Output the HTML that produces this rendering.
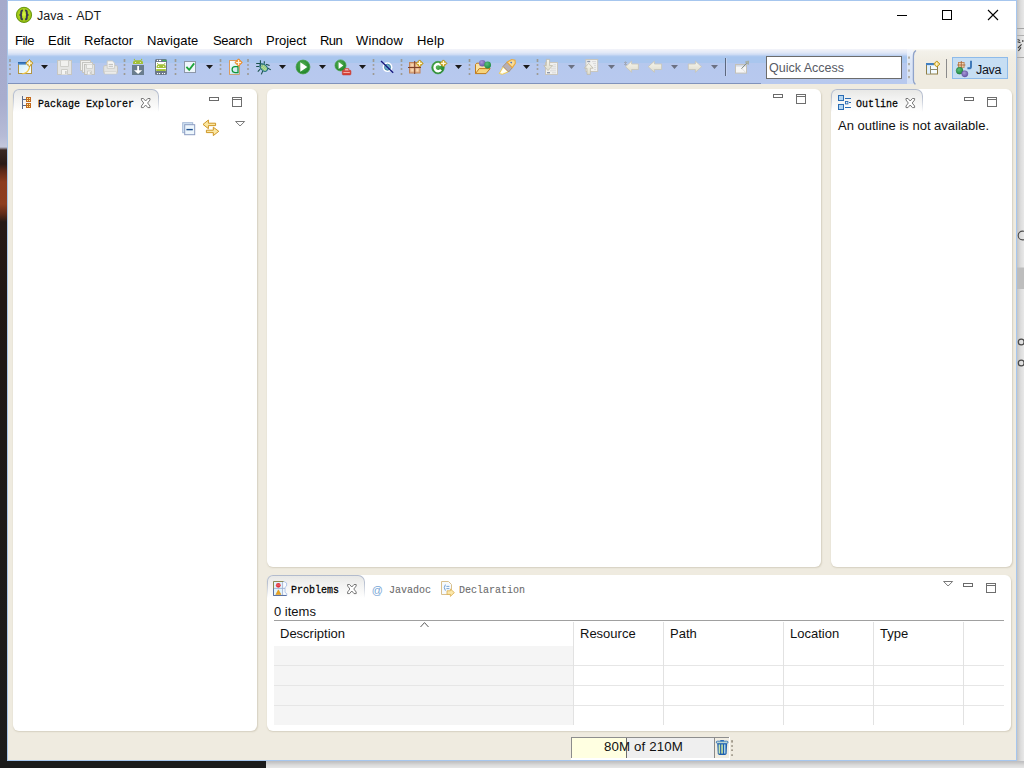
<!DOCTYPE html>
<html>
<head>
<meta charset="utf-8">
<title>Java - ADT</title>
<style>
*{box-sizing:border-box;margin:0;padding:0}
html,body{width:1024px;height:768px;overflow:hidden;background:#efebe0}
body{position:relative;font-family:"Liberation Sans",sans-serif;font-size:13px;color:#000}
.a{position:absolute}
svg{position:absolute;overflow:visible}
#desk-l{left:0;top:0;width:7px;height:768px;background:linear-gradient(to bottom,#a5aacb 0px,#a8adce 100px,#b6bbd6 136px,#c3c7dc 147px,#3a2822 150px,#2a1a16 164px,#5c2818 171px,#8c3b1e 182px,#8e3d1f 204px,#5e2a19 214px,#261915 222px,#201714 300px,#1d1a18 500px,#1c1c1c 768px)}
#desk-b{left:0;top:761px;width:266px;height:7px;background:#1b1b1b}
#desk-r{left:1017px;top:0;width:7px;height:768px;background:linear-gradient(to right,#c4c4c4 0,#d2d2d2 2px,#dedede 4px,#e8e8e8 7px)}
#desk-br{left:266px;top:761px;width:758px;height:7px;background:linear-gradient(to bottom,#bdbdbf 0,#cacaca 2px,#dadada 4px,#e6e6e6 7px)}
#bl{left:7px;top:0;width:1px;height:761px;background:#a8c5e8}
#br{left:1016px;top:0;width:1px;height:761px;background:#a6c6ee}
#bt{left:7px;top:0;width:1010px;height:1px;background:#a6c6ee}
#bb{left:7px;top:760px;width:1010px;height:1px;background:#a6c6ee}
#titlebar{left:8px;top:1px;width:1008px;height:48px;background:#fff}
.mi{position:absolute;top:33px;font-size:13px;line-height:16px;color:#000;white-space:nowrap}
#title{left:37px;top:8px;word-spacing:1.2px;font-size:12.5px;line-height:16px;color:#1a1a1a;white-space:nowrap}
#toolbar{left:8px;top:49px;width:906px;height:35px;background:linear-gradient(to bottom,#f3f4f9 0,#eceff8 1.5px,#e2e9f7 3.5px,#cfdcf4 5.5px,#b3cbf0 7px,#a9c6ee 8px,#a9c6ee 13.6px,#b6c8ee 14.4px,#b8c9ee 35px)}
#tb-right{left:913px;top:49px;width:103px;height:36px;background:linear-gradient(to bottom,#fbfaf7 0,#f3f1ea 2px,#f0ede4 10px,#efebe0 30px)}
.panel{position:absolute;background:#fff;border-radius:6px;box-shadow:0.5px 1px 1.5px rgba(150,140,110,.28)}
.tab{position:absolute;height:25px;border:1px solid transparent;border-bottom:none;border-radius:6px 7px 0 0;background:linear-gradient(to bottom,#e8e8e6 0,#f3f3f2 9px,#ffffff 22px) padding-box,linear-gradient(to bottom,#b2bbcd 0,#b9c1d1 8px,#d8dce4 15px,#ffffff 23px) border-box}
.tabmask{position:absolute;height:12px;background:linear-gradient(to bottom,rgba(255,255,255,0) 0,#fff 10px)}
.tt{position:absolute;font-family:"Liberation Mono",monospace;font-size:10px;font-weight:normal;-webkit-text-stroke:0.22px #000;white-space:nowrap;line-height:12px;color:#000;transform:scale(1,1.16);transform-origin:0 0}
.tt.g{color:#6c6c6c;-webkit-text-stroke:0.1px #6c6c6c}
.hd{position:absolute;width:2px}
.hd i{position:absolute;left:0;width:2px;background:#a39a84;display:block}
.t13{position:absolute;font-size:13px;line-height:16px;white-space:nowrap}
</style>
</head>
<body>
<div id="desk-l" class="a"></div>
<div id="desk-b" class="a"></div>
<div id="desk-r" class="a"></div>
<div id="desk-br" class="a"></div>
<div id="titlebar" class="a"></div>
<div id="title" class="a">Java - ADT</div>
<span class="mi" style="left:15px;letter-spacing:-0.5px">File</span>
<span class="mi" style="left:48px">Edit</span>
<span class="mi" style="left:84px">Refactor</span>
<span class="mi" style="left:147px">Navigate</span>
<span class="mi" style="left:213px;letter-spacing:-0.35px">Search</span>
<span class="mi" style="left:266px">Project</span>
<span class="mi" style="left:320px;letter-spacing:-0.6px">Run</span>
<span class="mi" style="left:356px;letter-spacing:0.12px">Window</span>
<span class="mi" style="left:417px;letter-spacing:0.2px">Help</span>
<div id="toolbar" class="a"></div>
<div class="a" style="left:8px;top:83px;width:753px;height:1px;background:#8092bb"></div>
<div id="tb-right" class="a"></div>
<svg class="a" style="left:0;top:0" width="1024" height="768" viewBox="0 0 1024 768">
<defs>
<radialGradient id="gApp" cx="50%" cy="45%" r="55%"><stop offset="0" stop-color="#dcf648"/><stop offset="0.5" stop-color="#b2d820"/><stop offset="0.85" stop-color="#9cc416"/><stop offset="1" stop-color="#86ae0c"/></radialGradient>
<linearGradient id="gNew" x1="0" y1="0" x2="1" y2="1"><stop offset="0" stop-color="#c9ecfa"/><stop offset="1" stop-color="#ffffff"/></linearGradient>
<radialGradient id="gRun" cx="50%" cy="40%" r="60%"><stop offset="0" stop-color="#7fd06a"/><stop offset="0.6" stop-color="#2f9a2f"/><stop offset="1" stop-color="#1c7a22"/></radialGradient>
<linearGradient id="gDis" x1="0" y1="0" x2="0" y2="1"><stop offset="0" stop-color="#eef0f3"/><stop offset="1" stop-color="#c9cdd6"/></linearGradient>
<linearGradient id="gArrowD" x1="0" y1="0" x2="0" y2="1"><stop offset="0" stop-color="#f4f3ee"/><stop offset="1" stop-color="#d4d2c6"/></linearGradient>
</defs>
<!-- app icon -->
<circle cx="24" cy="14.9" r="7.6" fill="url(#gApp)" stroke="#5f8e04" stroke-width="0.9"/>
<path d="M22.9 10.4 Q21.2 10.4 21.2 12 V13.5 Q21.2 14.9 19.5 14.9 Q21.2 14.9 21.2 16.3 V17.8 Q21.2 19.4 22.9 19.4" fill="none" stroke="#38374e" stroke-width="1.9"/>
<path d="M25.1 10.4 Q26.8 10.4 26.8 12 V13.5 Q26.8 14.9 28.5 14.9 Q26.8 14.9 26.8 16.3 V17.8 Q26.8 19.4 25.1 19.4" fill="none" stroke="#38374e" stroke-width="1.9"/>
<!-- window controls -->
<rect x="897" y="15" width="10" height="1" fill="#000"/>
<rect x="942.5" y="10.5" width="9" height="9" fill="none" stroke="#000" stroke-width="1"/>
<path d="M988 10 L998 20 M998 10 L988 20" stroke="#000" stroke-width="1.1" fill="none"/>
</svg>

<!--I2S--><svg class="a" style="left:0;top:0" width="1024" height="768" viewBox="0 0 1024 768">
<defs>
<g id="dd"><path d="M0 0 H7 L3.5 4 Z" fill="#1a1a1a"/></g>
<g id="ddg"><path d="M0 0 H7 L3.5 4 Z" fill="#6b7183"/></g>
<g id="hdl"><rect x="0.2" y="59" width="1.6" height="3" fill="#9a958a" opacity=".9"/><rect x="0.2" y="64" width="1.6" height="2" fill="#9e998e" opacity=".85"/><rect x="0.2" y="68" width="1.6" height="2" fill="#9e998e" opacity=".85"/><rect x="0.2" y="73" width="1.6" height="2" fill="#9a958a" opacity=".9"/></g>
<g id="spark"><path d="M0 -3.6 L3.6 0 L0 3.6 L-3.6 0 Z" fill="#e0bc48" stroke="#b8922a" stroke-width="0.9"/><path d="M0 -2.4 V2.4 M-2.4 0 H2.4" stroke="#fffbe6" stroke-width="1.3"/></g>
</defs>
<!-- handles -->
<use href="#hdl" x="9"/><use href="#hdl" x="123.5"/><use href="#hdl" x="174.5"/><use href="#hdl" x="219.5"/><use href="#hdl" x="247"/><use href="#hdl" x="372.5"/><use href="#hdl" x="400.5"/><use href="#hdl" x="468.5"/><use href="#hdl" x="536.5"/>
<!-- dropdown arrows -->
<use href="#dd" x="41" y="65"/><use href="#dd" x="206" y="65"/><use href="#dd" x="279" y="65"/><use href="#dd" x="319" y="65"/><use href="#dd" x="359" y="65"/><use href="#dd" x="455" y="65"/><use href="#dd" x="523" y="65"/>
<use href="#ddg" x="568" y="65"/><use href="#ddg" x="608" y="65"/><use href="#ddg" x="671" y="65"/><use href="#ddg" x="711" y="65"/>

<!-- New wizard -->
<rect x="18.5" y="62.5" width="13" height="11" fill="url(#gNew)" stroke="#b39542" stroke-width="1"/>
<rect x="18" y="62" width="8" height="2.6" fill="#3f7fc3"/>
<rect x="18" y="62" width="8" height="1" fill="#2d69ad"/>
<path d="M22 74 Q29.5 73 29.8 65" fill="none" stroke="#f1c84a" stroke-width="1.2"/>
<use href="#spark" x="29.4" y="63.2"/>

<!-- Save (disabled) -->
<g>
<rect x="57.5" y="60.5" width="14" height="14" fill="#e5e5e3" stroke="#c6c6c2" stroke-width="1"/>
<path d="M60.5 60.5 V66.5 H68.5 V60.5" fill="#f1f1ef" stroke="#cfcfcb" stroke-width="1"/>
<path d="M61.5 74.5 V69.5 H67.5 V74.5" fill="#f5f5f3" stroke="#cdcdc9" stroke-width="1"/>
<rect x="65.2" y="71" width="1.3" height="3" fill="#c2c2be"/>
</g>
<!-- Save all (disabled) -->
<g>
<rect x="80.5" y="60.5" width="10" height="10" fill="#f0f0ee" stroke="#c6c6c2" stroke-width="1"/>
<rect x="82.5" y="62.5" width="10" height="10" fill="#f0f0ee" stroke="#c6c6c2" stroke-width="1"/>
<rect x="84.5" y="64.5" width="10" height="10" fill="#e5e5e3" stroke="#c2c2be" stroke-width="1"/>
<path d="M86.5 64.5 V68.5 H92.5 V64.5" fill="#f3f3f1" stroke="#cfcfcb" stroke-width="0.9"/>
<path d="M87.5 74.5 V71 H91.5 V74.5" fill="#f6f6f4" stroke="#cdcdc9" stroke-width="0.9"/>
<rect x="89.8" y="72" width="1" height="2.2" fill="#c2c2be"/>
</g>
<!-- Print (disabled) -->
<g>
<rect x="103.7" y="65.6" width="13.8" height="8" rx="1.2" fill="#e4e4e2" stroke="#c6c6c2" stroke-width="1"/>
<path d="M107.2 68.3 V60.9 H112.4 L114.6 63 V68.3 Z" fill="#f5f5f4" stroke="#c9c9c5" stroke-width="0.9"/>
<path d="M108.6 64.4 H113 M108.6 66.3 H113" stroke="#b9b9b6" stroke-width="0.9"/>
<rect x="104.6" y="71.8" width="12" height="2.2" fill="#f0f0ee" stroke="#cbcbc7" stroke-width="0.6"/>
</g>

<!-- SDK manager -->
<g>
<rect x="132" y="65" width="12" height="10" fill="#6a7d8e"/>
<path d="M133 64 V63 Q133 60.3 135.6 60.3 H140.4 Q143 60.3 143 63 V64 Z" fill="#a2c037"/>
<path d="M135.6 60.8 L134.4 59.4 M140.4 60.8 L141.6 59.4" stroke="#a2c037" stroke-width="0.7"/>
<circle cx="134.4" cy="59.4" r="0.6" fill="#a2c037"/><circle cx="141.6" cy="59.4" r="0.6" fill="#a2c037"/>
<circle cx="135.6" cy="62.5" r="0.6" fill="#eef4d8"/><circle cx="140.4" cy="62.5" r="0.6" fill="#eef4d8"/>
<path d="M137.2 66 H139 V70.2 H142.2 L138.1 74 L134 70.2 H137.2 Z" fill="#fff"/>
</g>
<!-- AVD manager -->
<g>
<rect x="155" y="59" width="12" height="16" rx="1.6" fill="#6b7888"/>
<rect x="156" y="62" width="10" height="9" fill="#fff"/>
<path d="M156.6 68 V66.6 Q156.6 64.2 159 64.2 H163.4 Q165.8 64.2 165.8 66.6 V68 Z" fill="#a2c037"/>
<rect x="156.2" y="69.1" width="9.6" height="1.9" fill="#a2c037"/>
<path d="M158.8 64.8 L157.6 63.5 M163.6 64.8 L164.8 63.5" stroke="#a2c037" stroke-width="0.7"/>
<circle cx="157.6" cy="63.5" r="0.55" fill="#a2c037"/><circle cx="164.8" cy="63.5" r="0.55" fill="#a2c037"/>
<circle cx="158.6" cy="66.4" r="0.6" fill="#f4f8e4"/><circle cx="163.6" cy="66.4" r="0.6" fill="#f4f8e4"/>
<rect x="156.9" y="59.9" width="1.2" height="1.2" fill="#fff"/><rect x="159" y="59.9" width="2.1" height="1.2" fill="#fff"/><rect x="162.8" y="59.9" width="1.2" height="1.2" fill="#22dd44"/><rect x="164.9" y="59.9" width="1.2" height="1.2" fill="#22dd44"/>
<rect x="157" y="73" width="1.1" height="1.1" fill="#fff"/><rect x="159" y="73" width="1.1" height="1.1" fill="#fff"/><rect x="162" y="73" width="1.1" height="1.1" fill="#fff"/><rect x="164" y="73" width="1.1" height="1.1" fill="#fff"/>
</g>
<!-- checkbox task -->
<g>
<rect x="184.5" y="61.5" width="11" height="11" fill="#eef6fb" stroke="#8d97a8" stroke-width="1"/>
<path d="M186.4 66.8 L189.2 69.8 L194.2 63.4" fill="none" stroke="#1ea43a" stroke-width="1.8"/>
</g>
<!-- new java class (a) -->
<g>
<linearGradient id="gPg" x1="0" y1="0" x2="0.6" y2="1"><stop offset="0" stop-color="#ffffff"/><stop offset="1" stop-color="#c4e6ee"/></linearGradient>
<path d="M229.5 60.5 H237 L239.5 63 V74.5 H229.5 Z" fill="url(#gPg)" stroke="#c9a078" stroke-width="1"/>
<path d="M229.5 74.5 V60.5 H236.5" fill="none" stroke="#dc9a5c" stroke-width="1"/>
<path d="M238 66.7 H235 a2.9 2.9 0 0 0 0 5.8 H238 Z" fill="none" stroke="#12963a" stroke-width="1.25"/>
<g transform="translate(238.6,62.5)"><path d="M0 -3.7 L3.7 0 L0 3.7 L-3.7 0 Z" fill="#f5a040" stroke="#e8821e" stroke-width="0.8"/><path d="M0 -2.4 V2.4 M-2.4 0 H2.4" stroke="#fff6e6" stroke-width="1.1"/></g>
</g>
</svg>
<!--I2E-->
<!--I3S--><svg class="a" style="left:0;top:0" width="1024" height="768" viewBox="0 0 1024 768">
<defs>
<radialGradient id="gRun2" cx="45%" cy="40%" r="65%"><stop offset="0" stop-color="#5db55a"/><stop offset="0.7" stop-color="#2b8f32"/><stop offset="1" stop-color="#1f7a28"/></radialGradient>
<linearGradient id="gIv" x1="0" y1="0" x2="0" y2="1"><stop offset="0" stop-color="#f7f6ee"/><stop offset="1" stop-color="#dedccd"/></linearGradient>
<radialGradient id="gPur" cx="40%" cy="35%" r="65%"><stop offset="0" stop-color="#a898d8"/><stop offset="1" stop-color="#6a58a8"/></radialGradient>
<radialGradient id="gGrn" cx="40%" cy="35%" r="65%"><stop offset="0" stop-color="#5cc07a"/><stop offset="1" stop-color="#1f8a44"/></radialGradient>
<radialGradient id="gPk" cx="50%" cy="50%" r="60%"><stop offset="0" stop-color="#fbe6c2"/><stop offset="1" stop-color="#e3ae84"/></radialGradient>
<g id="spk2"><path d="M0 -3.5 L3.5 0 L0 3.5 L-3.5 0 Z" fill="#d9b02a" stroke="#b48c10" stroke-width="0.8"/><path d="M0 -2.3 V2.3 M-2.3 0 H2.3" stroke="#fffbe0" stroke-width="1.1"/></g>
</defs>
<!-- debug bug -->
<g stroke="#174f48" stroke-width="1.05" fill="none">
<path d="M260.4 60.2 V64 M264.3 61.2 V63.8 M256.2 63.5 H260 M256.2 66.5 H259.4 M257.8 71.6 L260.2 69.2 M261.3 74.4 L262.8 71 M266 64.2 L269.6 65.4 M267.6 68 L270.8 69.9"/>
</g>
<ellipse cx="263.8" cy="67.6" rx="4.2" ry="2.9" transform="rotate(45 263.8 67.6)" fill="#b4dc98" stroke="#25747e" stroke-width="1.2"/>
<path d="M262.4 66.2 L265.6 69.4 M263.8 65.6 L266.4 68.2 M261.8 67.8 L264.4 70.4" stroke="#86c070" stroke-width="0.7"/>
<circle cx="261" cy="64.8" r="1.6" fill="#1f6068"/>
<circle cx="261.6" cy="65.2" r="0.6" fill="#d8f0b0"/>
<!-- run -->
<circle cx="303" cy="67" r="6.9" fill="url(#gRun2)" stroke="#4aa24a" stroke-width="0.9"/>
<path d="M300.3 62.2 V71.8 L307.3 67 Z" fill="#fff"/>
<!-- run external -->
<circle cx="340.5" cy="65.4" r="5.5" fill="url(#gRun2)" stroke="#4aa24a" stroke-width="0.8"/>
<path d="M338.6 62 V68.9 L343.3 65.4 Z" fill="#fff"/>
<rect x="342.3" y="70.3" width="8.6" height="4.6" rx="0.8" fill="#d8443a" stroke="#c23428" stroke-width="0.6"/>
<path d="M344.6 70.3 V68.8 H348.8 V70.3" fill="#fbe9e6" stroke="#cf3d32" stroke-width="1"/>
<rect x="343.4" y="72" width="6.4" height="0.9" fill="#f6b8b0"/>
<!-- skip breakpoints -->
<circle cx="387.5" cy="67.2" r="4.9" fill="#fdfeff"/>
<circle cx="387.5" cy="67.2" r="3" fill="#6aaccb" stroke="#3f7f9f" stroke-width="0.9"/>
<path d="M381 61 L393.2 72.8" stroke="#14147c" stroke-width="1.25"/>
<!-- new package -->
<rect x="409.5" y="62.5" width="10.5" height="10.5" fill="#e6b48c" stroke="#bf8258" stroke-width="1"/>
<rect x="410.4" y="63.4" width="3.6" height="3.4" fill="url(#gPk)"/><rect x="415.4" y="63.4" width="3.8" height="3.4" fill="url(#gPk)"/>
<rect x="410.4" y="68.2" width="3.6" height="3.9" fill="url(#gPk)"/><rect x="415.4" y="68.2" width="3.8" height="3.9" fill="url(#gPk)"/>
<path d="M414.7 61 V74 M408 67.5 H421" stroke="#7c4128" stroke-width="1"/>
<use href="#spk2" x="419.6" y="63.4"/>
<!-- new class C -->
<circle cx="438" cy="67.6" r="6.3" fill="url(#gRun2)" stroke="#3f9c46" stroke-width="0.7"/>
<path d="M441 65.4 A3.6 3.6 0 1 0 441 69.8" fill="none" stroke="#fff" stroke-width="2.4"/>
<use href="#spk2" x="443.4" y="63.4"/>
<!-- open type folder -->
<path d="M475.5 73.6 V64.4 L476.8 63.2 H480 L481.3 64.6 H486.5 V69" fill="#f9e2a4" stroke="#c27c1c" stroke-width="1"/>
<path d="M475.5 73.6 L479.2 68.6 H490.2 L486 73.6 Z" fill="#f7d47c" stroke="#c27c1c" stroke-width="1"/>
<circle cx="482.3" cy="63.2" r="3.3" fill="url(#gPur)"/>
<circle cx="487.6" cy="65" r="3.4" fill="url(#gGrn)"/>
<!-- search torch -->
<path d="M503.2 66.6 L508.4 71.8 L502.4 74.3 L499.3 73.5 Z" fill="#fffbe0" stroke="#f0c648" stroke-width="0.9"/>
<path d="M500.6 73.2 L504 68.6 L506.6 71.2 Z" fill="#ffffff"/>
<path d="M503 66.4 L507 62.2 L512.4 67.6 L508.6 72 Z" fill="#b7afb5" stroke="#a58a60" stroke-width="0.8"/>
<path d="M507 62.2 L511.6 59.5 L515 60.3 L515.3 63.4 L512.4 67.6 Z" fill="#f8dc98" stroke="#eba83a" stroke-width="1.1"/>
<path d="M510.6 62 L511.8 63.2" stroke="#2f5fc0" stroke-width="1.1"/>
<!-- next annotation (disabled) -->
<rect x="545.5" y="62.5" width="12" height="12" fill="#f1f1ef" stroke="#c9c6be" stroke-width="1"/>
<path d="M553.5 64.8 H556 M552.5 66.8 H556 M551 68.8 H556 M550 70.8 H556 M552 72.8 H556" stroke="#d2d2d2" stroke-width="0.8"/>
<rect x="547" y="72" width="3" height="1.4" fill="#8f98aa"/>
<path d="M546.4 59.4 H549.6 V65.6 H552.6 L548 70.6 L543.8 65.6 H546.4 Z" fill="url(#gIv)" stroke="#bcb9ab" stroke-width="0.8"/>
<!-- prev annotation (disabled) -->
<rect x="585.9" y="59.5" width="11.8" height="12" fill="#f1f1ef" stroke="#c9c6be" stroke-width="1"/>
<path d="M592 61.6 H596 M593 63.6 H596 M594 65.6 H596 M594 67.6 H596 M594 69.6 H596" stroke="#d2d2d2" stroke-width="0.8"/>
<rect x="587.2" y="60.8" width="3" height="1.4" fill="#8f98aa"/>
<path d="M588.7 63.4 L593.2 68.2 H590.4 V74.4 H587 V68.2 H584.4 Z" fill="url(#gIv)" stroke="#bcb9ab" stroke-width="0.8"/>
<!-- last edit -->
<path d="M625.6 66.7 L631.6 61.2 V64 H638.4 V69.5 H631.6 V72.3 Z" fill="url(#gIv)" stroke="#c6c4b6" stroke-width="0.8"/>
<path d="M624 62 L627 65 M627 62 L624 65 M625.5 61.4 V65.6" stroke="#9ea3ae" stroke-width="0.8"/>
<!-- back -->
<path d="M648.2 66.7 L654.4 61.2 V64 H661.6 V69.5 H654.4 V72.3 Z" fill="url(#gIv)" stroke="#c6c4b6" stroke-width="0.8"/>
<!-- forward -->
<path d="M701.6 66.7 L695.4 61.2 V64 H688.3 V69.5 H695.4 V72.3 Z" fill="url(#gIv)" stroke="#c6c4b6" stroke-width="0.8"/>
<!-- separator -->
<rect x="725" y="58" width="1" height="18" fill="#5d687e"/>
<rect x="726" y="58" width="1" height="18" fill="#c9d6f2" opacity=".8"/>
<!-- pin editor (disabled) -->
<rect x="735.5" y="64.5" width="11" height="8.6" fill="#f6f6f6" stroke="#c4c1b8" stroke-width="1"/>
<rect x="736" y="65" width="10" height="1.6" fill="#d4dae4"/>
<path d="M741.4 68.8 L747 62.8" stroke="#7f8c84" stroke-width="1"/>
<path d="M745.4 62 L748.6 61 L748.4 64.4 Z" fill="#a9b5a7" stroke="#a3a89c" stroke-width="0.8"/>
<path d="M742 68.6 L745.6 72.4" stroke="#d4d4d0" stroke-width="0.7"/>
</svg>
<!--I3E-->
<!-- quick access -->
<div class="a" style="left:907px;top:49px;width:6px;height:35px;background:linear-gradient(to bottom,#f6f8fc 0,#eaf0fa 5px,#dde7f7 12px,#d6e1f5 35px)"></div>
<div class="a" style="left:766px;top:56px;width:136px;height:23px;background:#fff;border:1px solid #6c6c6c"></div>
<div class="a" id="qa" style="left:769px;top:60px;font-size:12.5px;line-height:16px;color:#575a64;white-space:nowrap">Quick Access</div>
<svg class="a" style="left:0;top:0" width="1024" height="768" viewBox="0 0 1024 768">
<g fill="#a09988" opacity=".85"><rect x="908.2" y="56.5" width="1.6" height="2.2"/><rect x="908.2" y="63" width="1.6" height="2.2"/><rect x="908.2" y="69.5" width="1.6" height="2.2"/><rect x="908.2" y="76" width="1.6" height="2.2"/></g>
<!-- curved toolbar end -->
<path d="M916 50.5 Q913.4 52 913.4 56 V80 Q913.4 83 915.4 84.4" fill="none" stroke="#8fa3cb" stroke-width="1.3"/>
<!-- open perspective -->
<rect x="926.5" y="63.5" width="11" height="10.5" fill="#f4fbff" stroke="#8f7e46" stroke-width="1"/>
<rect x="926" y="63" width="8" height="2.2" fill="#3f7fc3"/>
<rect x="927" y="66" width="3" height="7.5" fill="#dcefff"/>
<path d="M930.5 66 V74 M930.5 69.5 H937.5" stroke="#8f8a6a" stroke-width="1"/>
<g transform="translate(936.8,64) scale(0.86)"><path d="M0 -3.6 L3.6 0 L0 3.6 L-3.6 0 Z" fill="#e2b82a" stroke="#b48c14" stroke-width="0.9"/><path d="M0 -2.3 V2.3 M-2.3 0 H2.3" stroke="#fffbe4" stroke-width="1.2"/></g>
<!-- separator -->
<rect x="946" y="59" width="1" height="19" fill="#8b8b8b"/>
<!-- Java button -->
<rect x="952.5" y="57.5" width="55" height="21" fill="#c6def3" stroke="#8ebbea" stroke-width="1"/>
<!-- java perspective icon -->
<rect x="958.5" y="62.5" width="5.6" height="4.8" fill="#f2d6b4" stroke="#c08452" stroke-width="0.9"/>
<path d="M961.3 61 V68.4 M957.2 65 H965.4" stroke="#a8683a" stroke-width="0.9"/>
<path d="M971 60.8 V66.4 Q971 68.3 969 68.3 H967.4" fill="none" stroke="#3a76b6" stroke-width="1.9"/>
<circle cx="959.6" cy="70.7" r="3.4" fill="url(#gGrn)" stroke="#2a7e3c" stroke-width="0.6"/>
<circle cx="964.8" cy="73.8" r="3.1" fill="url(#gPur)" stroke="#5a4a98" stroke-width="0.5"/>
</svg>
<div class="a" id="javatxt" style="left:976px;top:62px;font-size:12.5px;letter-spacing:-0.3px;line-height:16px;color:#10131c;white-space:nowrap">Java</div>

<!--TOOLBAR-ICONS-->

<div class="panel" id="p-pkg" style="left:13px;top:89px;width:244px;height:642px"></div>
<div class="panel" id="p-edit" style="left:267px;top:89px;width:554px;height:478px"></div>
<div class="panel" id="p-out" style="left:831px;top:89px;width:181px;height:478px"></div>
<div class="panel" id="p-prob" style="left:267px;top:575px;width:744px;height:156px"></div>
<!-- tabs -->
<div class="tab" style="left:13px;top:89px;width:146px"></div>
<div class="tab" style="left:831px;top:89px;width:92px"></div>
<div class="tab" style="left:267px;top:575px;width:98px"></div>
<div class="tt" style="left:38px;top:97.5px">Package Explorer</div>
<div class="tt" style="left:856px;top:97.5px">Outline</div>
<div class="tt" style="left:291px;top:583.5px">Problems</div>
<div class="tt g" style="left:389px;top:583.5px">Javadoc</div>
<div class="tt g" style="left:459px;top:583.5px">Declaration</div>
<div class="t13" id="outl" style="left:838px;top:118px;color:#111">An outline is not available.</div>
<div class="t13" id="items" style="left:274px;top:604px;color:#111">0 items</div>
<!-- table -->
<div class="a" style="left:274px;top:620px;width:730px;height:1px;background:#a0a0a0"></div>
<div class="a" style="left:274px;top:646px;width:299px;height:79px;background:#f5f5f5"></div>
<div class="a" style="left:274px;top:665px;width:730px;height:1px;background:#e6e6e6"></div>
<div class="a" style="left:274px;top:685px;width:730px;height:1px;background:#e6e6e6"></div>
<div class="a" style="left:274px;top:705px;width:730px;height:1px;background:#e6e6e6"></div>
<div class="a" style="left:573px;top:622px;width:1px;height:103px;background:#e2e2e2"></div>
<div class="a" style="left:663px;top:622px;width:1px;height:103px;background:#e2e2e2"></div>
<div class="a" style="left:783px;top:622px;width:1px;height:103px;background:#e2e2e2"></div>
<div class="a" style="left:873px;top:622px;width:1px;height:103px;background:#e2e2e2"></div>
<div class="a" style="left:963px;top:622px;width:1px;height:103px;background:#e2e2e2"></div>
<div class="t13" style="left:280px;top:626px;color:#111">Description</div>
<div class="t13" style="left:580px;top:626px;color:#111">Resource</div>
<div class="t13" style="left:670px;top:626px;color:#111">Path</div>
<div class="t13" style="left:790px;top:626px;color:#111">Location</div>
<div class="t13" style="left:880px;top:626px;color:#111">Type</div>
<svg class="a" style="left:0;top:0" width="1024" height="768" viewBox="0 0 1024 768">
<defs>
<g id="vmin"><rect x="0.5" y="0.5" width="9" height="3" fill="#fff" stroke="#6a6a6a" stroke-width="1"/></g>
<g id="vmax"><rect x="0.5" y="0.5" width="9" height="9" fill="#fff" stroke="#6e6e6e" stroke-width="1"/><rect x="0" y="2" width="10" height="1" fill="#6e6e6e"/></g>
<g id="vmenu"><path d="M0.6 0.5 H9.6 L5.1 5 Z" fill="#fff" stroke="#6a6a6a" stroke-width="0.9"/></g>
<g id="tclose"><path d="M1 0.5 L3 0.5 L5.2 3 L7.4 0.5 L9.6 0.5 L9.6 2 L7.2 5 L9.6 8 L9.6 9.6 L7.4 9.6 L5.2 7 L3 9.6 L1 9.6 L1 8 L3.3 5 L1 2 Z" fill="#fff" stroke="#6a6a6a" stroke-width="0.9"/></g>
</defs>
<!-- pkg explorer tab icon -->
<rect x="22" y="96" width="1" height="13" fill="#5c6c8c"/>
<rect x="22" y="99" width="4" height="1" fill="#5c6c8c"/><rect x="22" y="105" width="4" height="1" fill="#5c6c8c"/>
<rect x="26" y="97" width="5" height="5" fill="#c2681e"/><rect x="26" y="103" width="5" height="5" fill="#c2681e"/>
<g fill="#fff290"><rect x="27" y="98" width="1" height="1"/><rect x="29" y="98" width="1" height="1"/><rect x="27" y="100" width="1" height="1"/><rect x="29" y="100" width="1" height="1"/>
<rect x="27" y="104" width="1" height="1"/><rect x="29" y="104" width="1" height="1"/><rect x="27" y="106" width="1" height="1"/><rect x="29" y="106" width="1" height="1"/></g>
<use href="#tclose" x="140.4" y="98"/>
<use href="#vmin" x="209" y="97"/><use href="#vmax" x="232" y="97"/>
<use href="#vmenu" x="235" y="121"/>
<!-- collapse all -->
<rect x="182.7" y="122.7" width="10" height="10" fill="#d6e8f6" stroke="#a3b7d6" stroke-width="1"/>
<rect x="184.7" y="124.7" width="10" height="10" fill="#eef7fd" stroke="#8a9bc0" stroke-width="1"/>
<rect x="186.4" y="128.9" width="6.4" height="1.4" fill="#1b4d8e"/>
<!-- link with editor -->
<path d="M203 124.4 L208.4 120 V123.2 H215.6 V125.6 H208.4 V128.7 Z" fill="#fbe7a2" stroke="#c88c14" stroke-width="0.9" stroke-linejoin="round"/>
<path d="M218.8 131.3 L213.3 127.2 V130.2 H206.4 V132.6 H213.3 V135.6 Z" fill="#fbe7a2" stroke="#c88c14" stroke-width="0.9" stroke-linejoin="round"/>
<!-- editor area min/max -->
<use href="#vmin" x="773" y="94"/><use href="#vmax" x="796" y="94"/>
<!-- outline -->
<rect x="838.5" y="95.5" width="5" height="5" fill="#b4d6f2" stroke="#2a6cb4" stroke-width="1"/>
<rect x="838.5" y="104.5" width="5" height="5" fill="#b4d6f2" stroke="#2a6cb4" stroke-width="1"/>
<rect x="845.5" y="101.5" width="2.4" height="2.4" fill="#e8f2fb" stroke="#2a6cb4" stroke-width="0.9"/>
<rect x="845" y="98" width="6" height="1" fill="#2a6cb4"/><rect x="849" y="102" width="2" height="1" fill="#2a6cb4"/><rect x="845" y="107" width="6" height="1" fill="#2a6cb4"/>
<use href="#tclose" x="905" y="98"/>
<use href="#vmin" x="964" y="97"/><use href="#vmax" x="987" y="97"/>
<!-- problems -->
<use href="#tclose" x="346.6" y="584"/>
<use href="#vmenu" x="943" y="581"/><use href="#vmin" x="963" y="583"/><use href="#vmax" x="986" y="583"/>
<path d="M420.5 627 L424.5 622.6 L428.5 627" fill="none" stroke="#5a5a5a" stroke-width="1"/>
</svg>

<div class="a" style="left:371.5px;top:582px;font-size:11px;line-height:16px;color:#78a6d6;font-style:italic">@</div>
<svg class="a" style="left:0;top:0" width="1024" height="768" viewBox="0 0 1024 768">
<!-- problems icon -->
<path d="M273.5 581.5 H284 L286.6 583 V586 L285 587.4 V592.4 L286.8 593.6 V595.4 H273.5 Z" fill="#fafdff" stroke="#a9c0e6" stroke-width="0.9"/>
<rect x="274" y="582" width="8.4" height="13" fill="#e2f4fc"/>
<path d="M273.5 595.5 V581.5 H283.5" fill="none" stroke="#8c8a52" stroke-width="1"/>
<path d="M273.5 588.5 V595.5 H286.6" fill="none" stroke="#5a72a4" stroke-width="1"/>
<path d="M282.6 582 V595 M274 588.4 H285" stroke="#9fb0d2" stroke-width="0.9"/>
<circle cx="278.3" cy="585.3" r="2.4" fill="#e2343e"/>
<path d="M276.4 585.1 H280.2" stroke="#f59aa0" stroke-width="0.6"/>
<path d="M278.4 589.8 L281 594.6 H275.8 Z" fill="#eaa21e" stroke="#d88e10" stroke-width="0.5"/>
<!-- declaration icon -->
<path d="M441.5 581.5 H448.5 L451.5 584.5 V594.5 H441.5 Z" fill="#f6fafe" stroke="#d9c08e" stroke-width="1"/>
<path d="M445.4 584.6 Q443.2 587.6 445.4 590.6" fill="none" stroke="#6c9cd2" stroke-width="1"/>
<path d="M446.4 586.4 H449.4 M446.4 588.6 H449.4" stroke="#6c9cd2" stroke-width="0.9"/>
<path d="M447 590.8 H450.4 V589 L454.4 592.6 L450.4 596.4 V594.4 H447 Z" fill="#fbe8ac" stroke="#dcae50" stroke-width="0.8" stroke-linejoin="round"/>
</svg>

<!--PANEL-CONTENT-->

<div class="a" style="left:571px;top:737px;width:159px;height:23px;background:#fff"></div>
<div class="a" style="left:571px;top:737px;width:158px;height:21px;background:#f1ede2;border-top:1px solid #8e8e8e"></div>
<div class="a" style="left:571px;top:737px;width:144px;height:21px;background:#efefef;border-left:1px solid #8c8c8c;border-top:1px solid #8e8e8e;border-right:1px solid #8a8a8a"></div>
<div class="a" style="left:572px;top:738px;width:54px;height:20px;background:#ffffe1"></div>
<div class="a" style="left:626px;top:738px;width:1px;height:20px;background:#6e6e6e"></div>
<div class="a" id="heap" style="left:604px;top:739px;font-size:13.3px;letter-spacing:0.12px;line-height:16px;color:#111;white-space:nowrap">80M of 210M</div>
<svg class="a" style="left:0;top:0" width="1024" height="768" viewBox="0 0 1024 768">
<defs><linearGradient id="gBin" x1="0" y1="0" x2="1" y2="0"><stop offset="0" stop-color="#6aa2d8"/><stop offset="0.5" stop-color="#8fc0ea"/><stop offset="1" stop-color="#3f7cc0"/></linearGradient></defs>
<path d="M717.2 743.2 H727.2 L726.6 753.6 Q726.4 755 725 755 H719.4 Q718 755 717.8 753.6 Z" fill="#1d5fae"/>
<g><rect x="718.6" y="744.4" width="1.5" height="9.2" fill="#c8e4b0"/><rect x="721.3" y="744.4" width="1.5" height="9.2" fill="#d8ec9c"/><rect x="724" y="744.4" width="1.5" height="9.2" fill="#a8d0e4"/></g>
<path d="M716.3 742.2 Q716.3 741.2 717.4 741.2 H726.8 Q728 741.2 728 742.2 Q728 743.3 726.8 743.3 H717.4 Q716.3 743.3 716.3 742.2 Z" fill="#d8ecd8" stroke="#2a6cb8" stroke-width="0.9"/>
<rect x="720.3" y="740" width="3.6" height="1.3" fill="#2a6cb8"/>
<g fill="#8f8878" opacity=".9"><rect x="731.2" y="740.2" width="1.7" height="2.4"/><rect x="731.2" y="745.2" width="1.7" height="1.6"/><rect x="731.2" y="749.4" width="1.7" height="1.6"/><rect x="731.2" y="754.3" width="1.7" height="1.6"/></g>
</svg>

<svg class="a" style="left:0;top:0" width="1024" height="768" viewBox="0 0 1024 768">
<rect x="1017" y="28" width="7" height="1" fill="#a6a6a6"/>
<rect x="1017" y="35" width="7" height="1" fill="#b0b0b0"/>
<rect x="1017" y="57" width="7" height="1" fill="#ababab"/>
<path d="M1017.6 39.6 L1020 40.4 M1017.6 41.8 L1020.4 42.6 M1018 48 L1021.6 44.4 M1018.4 51 L1021 47.4 M1022.8 40 V42" stroke="#3c3c3c" stroke-width="1.1" fill="none"/>
<rect x="1017" y="267.5" width="7" height="21.5" fill="#bdbdbd"/>
<circle cx="1022.6" cy="235.5" r="4.4" fill="none" stroke="#4a4a4a" stroke-width="1.1"/>
<circle cx="1021.2" cy="342" r="2.9" fill="none" stroke="#4a4a4a" stroke-width="1.2"/>
<circle cx="1021.2" cy="363" r="2.9" fill="none" stroke="#4a4a4a" stroke-width="1.2"/>
</svg>

<!--STATUS-->
<div id="bl" class="a"></div><div id="br" class="a"></div><div id="bt" class="a"></div><div id="bb" class="a"></div>
</body>
</html>
